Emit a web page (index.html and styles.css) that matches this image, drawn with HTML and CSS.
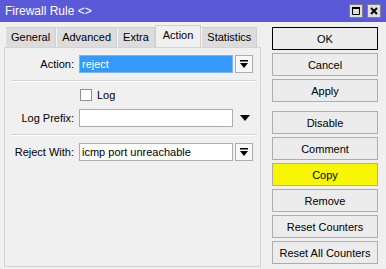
FILE: index.html
```html
<!DOCTYPE html>
<html lang="en">
<head>
    <meta charset="UTF-8">
    <title>Firewall Rule</title>
    <link rel="stylesheet" href="styles.css">
</head>
<body>
    <div class="titlebar">
        <span class="title">Firewall Rule &lt;&gt;</span>
        <div class="winbtns">
            <span class="winbtn">
                <svg width="8" height="8" viewBox="0 0 8 8"><path d="M0.5 0.5h7v7h-7z" fill="none" stroke="#000"/><rect x="0" y="0" width="8" height="2" fill="#000"/></svg>
            </span>
            <span class="winbtn">
                <svg width="8" height="8" viewBox="0 0 8 8"><path d="M1 1l6 6M7 1l-6 6" stroke="#000" stroke-width="2"/></svg>
            </span>
        </div>
    </div>

    <div class="window">
        <div class="main">
            <div class="tabs">
                <div class="tab">General</div>
                <div class="tab">Advanced</div>
                <div class="tab">Extra</div>
                <div class="tab active">Action</div>
                <div class="tab">Statistics</div>
            </div>
            <div class="panel">
                <div class="row first">
                    <label>Action:</label>
                    <div class="field selected">reject</div>
                    <span class="drop">
                        <svg width="8" height="8" viewBox="0 0 8 8"><rect x="0" y="0" width="8" height="1.5"/><path d="M0 3h8l-4 5z"/></svg>
                    </span>
                </div>
                <div class="sep"></div>
                <div class="check">
                    <span class="box"></span>
                    <span>Log</span>
                </div>
                <div class="row prefix">
                    <label>Log Prefix:</label>
                    <div class="field"></div>
                    <span class="arrow">
                        <svg width="10" height="6" viewBox="0 0 10 6"><path d="M0 0h10l-5 6z"/></svg>
                    </span>
                </div>
                <div class="sep"></div>
                <div class="row">
                    <label>Reject With:</label>
                    <div class="field">icmp port unreachable</div>
                    <span class="drop">
                        <svg width="8" height="8" viewBox="0 0 8 8"><rect x="0" y="0" width="8" height="1.5"/><path d="M0 3h8l-4 5z"/></svg>
                    </span>
                </div>
            </div>
        </div>

        <div class="actions">
            <button class="btn default">OK</button>
            <button class="btn">Cancel</button>
            <button class="btn">Apply</button>
            <button class="btn group">Disable</button>
            <button class="btn">Comment</button>
            <button class="btn marked">Copy</button>
            <button class="btn">Remove</button>
            <button class="btn">Reset Counters</button>
            <button class="btn">Reset All Counters</button>
        </div>
    </div>
</body>
</html>
```

FILE: styles.css
```css
body {
    margin: 0;
    width: 386px;
    height: 269px;
    overflow: hidden;
    background-color: #f0f0f0;
    font-family: 'Liberation Sans', Arial, sans-serif;
    font-size: 11px;
    color: #000;
}

.titlebar {
    height: 22px;
    background-color: #5a5ad8;
    display: flex;
    align-items: center;
    justify-content: space-between;
    padding: 0 5px 0 5px;
}

.title {
    color: #fff;
    font-size: 12px;
}

.winbtns {
    display: flex;
    gap: 4px;
}

.winbtn {
    width: 12px;
    height: 12px;
    background-color: #dedede;
    border: 1px solid #808080;
    display: flex;
    align-items: center;
    justify-content: center;
}

.window {
    display: flex;
    padding: 3px 0 0 4px;
}

.main {
    width: 257px;
}

.tabs {
    display: flex;
    align-items: flex-end;
    height: 22px;
    padding-left: 1px;
}

.tab {
    height: 20px;
    line-height: 19px;
    padding: 0 5px;
    box-sizing: border-box;
    background-color: #dcdcdc;
    border: 1px solid #d0d0d0;
    border-bottom: none;
    border-left-color: #f4f4f4;
}

.tab.active {
    height: 22px;
    background-color: #f0f0f0;
    padding: 0 7px;
    border-color: #d0d0d0;
}

.panel {
    height: 220px;
    box-sizing: border-box;
    border: 1px solid #d4d4d4;
    padding-top: 7px;
}

.row {
    display: flex;
    align-items: center;
}

.row label {
    width: 69px;
    text-align: right;
    margin-right: 5px;
}

.field {
    width: 154px;
    height: 18px;
    box-sizing: border-box;
    border: 1px solid #abadb3;
    background-color: #fff;
    padding: 0 2px;
    line-height: 16px;
}

.field.selected {
    background-color: #3399ff;
    border-color: #7eb4ea;
    color: #fff;
}

.drop {
    width: 18px;
    height: 18px;
    box-sizing: border-box;
    margin-left: 2px;
    border: 1px solid #adadad;
    background-color: #f7f7f7;
    display: flex;
    align-items: center;
    justify-content: center;
}

.arrow {
    margin-left: 7px;
    display: flex;
}

.sep {
    margin: 7px 3px 7px 6px;
    border-top: 1px solid #d5d5d5;
    border-bottom: 1px solid #fff;
}

.check {
    display: flex;
    align-items: center;
    gap: 5px;
    padding-left: 75px;
    height: 12px;
}

.box {
    width: 12px;
    height: 12px;
    box-sizing: border-box;
    border: 1px solid #8f8f8f;
    background-color: #fff;
}

.prefix {
    margin-top: 8px;
}

.actions {
    margin-left: 11px;
    margin-top: 2px;
    width: 106px;
    display: flex;
    flex-direction: column;
    gap: 3px;
}

.btn {
    height: 23px;
    padding: 0;
    border: 1px solid #adadad;
    background-color: #ececec;
    font-family: inherit;
    font-size: 11px;
    color: #000;
}

.btn.default {
    border-color: #000;
}

.btn.group {
    margin-top: 6px;
}

.btn.marked {
    background-color: #f7f700;
}
```
